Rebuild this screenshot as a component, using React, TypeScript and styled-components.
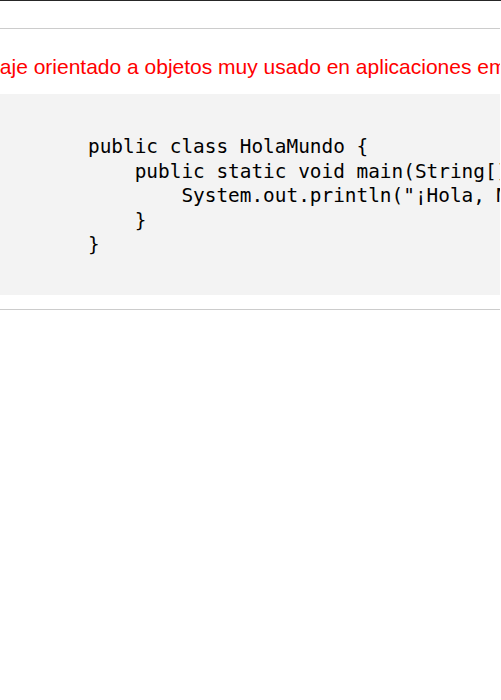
import React from "react";
import styled, { createGlobalStyle } from "styled-components";

const GlobalStyle = createGlobalStyle`
  html, body {
    margin: 0;
    padding: 0;
    background: #ffffff;
    overflow: hidden;
  }
  body {
    font-family: "Liberation Sans", Arial, sans-serif;
  }
`;

const TopRule = styled.div`
  height: 1px;
  background: #262626;
  width: 100%;
`;

const Page = styled.main`
  width: 500px;
  padding-top: 27px;
  overflow: hidden;
`;

const Divider = styled.hr`
  margin: 0;
  border: none;
  height: 1px;
  background: #cccccc;
`;

const Lead = styled.p`
  margin: 26px 0 15px -159px;
  font-family: "Liberation Sans", Arial, sans-serif;
  font-size: 21px;
  line-height: 24px;
  color: #ff0000;
  white-space: nowrap;
`;

const CodeBlock = styled.pre`
  margin: 0 0 14px;
  padding: 41px 0 37px 88px;
  background: #f3f3f3;
  font-family: "DejaVu Sans Mono", "Liberation Mono", monospace;
  font-size: 19.4px;
  line-height: 24.6px;
  color: #000000;
  white-space: pre;
  overflow: hidden;
`;

const code = `public class HolaMundo {
    public static void main(String[] args) {
        System.out.println("¡Hola, Mundo!");
    }
}`;

export default function App() {
  return (
    <>
      <GlobalStyle />
      <TopRule />
      <Page>
        <Divider />
        <Lead>
          Java es un lenguaje orientado a objetos muy usado en aplicaciones empresariales.
        </Lead>
        <CodeBlock>{code}</CodeBlock>
        <Divider />
      </Page>
    </>
  );
}
